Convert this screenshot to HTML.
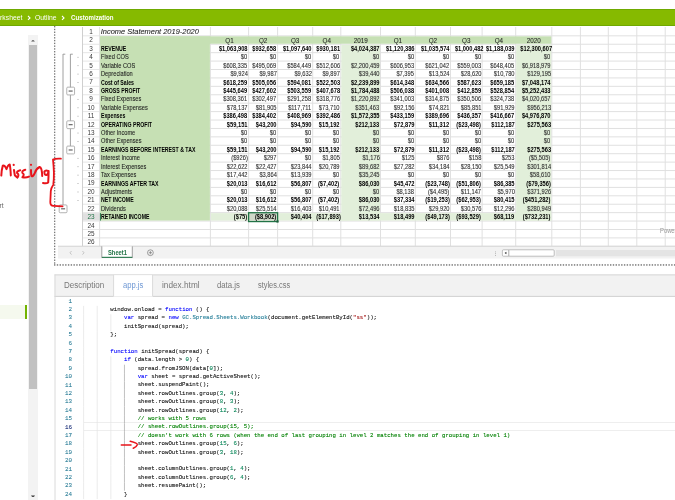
<!DOCTYPE html><html><head><meta charset="utf-8"><style>
*{margin:0;padding:0;box-sizing:border-box}
html,body{width:675px;height:500px;overflow:hidden;background:#fff;position:relative;font-family:"Liberation Sans",sans-serif}
.ab{position:absolute}
.c{position:absolute;white-space:nowrap;font-size:6.5px;line-height:8px;color:#2a2a2a;-webkit-text-stroke:0.08px #2a2a2a}
.n{text-align:right}
.n span{display:inline-block;transform:scaleX(.88);transform-origin:100% 50%}
.l{color:#1a1a1a}
.l span{display:inline-block;transform:scaleX(.87);transform-origin:0 50%}
.l.b span{transform:scaleX(.80)}
.q span{display:inline-block}
.b{font-weight:bold;color:#000;-webkit-text-stroke:0}
.cd{position:absolute;left:0;white-space:pre;font-family:"Liberation Mono",monospace;font-size:6.2px;line-height:8.4px;color:#111;-webkit-text-stroke:0.1px currentColor;transform:scaleX(.9205);transform-origin:0 50%}
.ln{position:absolute;width:20px;text-align:right;font-family:"Liberation Mono",monospace;font-size:5.9px;line-height:8.4px;color:#237893;-webkit-text-stroke:0.05px currentColor}
.k{color:#0000ff}.t{color:#267f99}.s{color:#a31515}.nm{color:#098658}.cm{color:#008000}
</style></head><body><div style="position:absolute;left:0;top:0;width:675px;height:500px;will-change:transform">

<div class="ab" style="left:0;top:9px;width:675px;height:17px;background:#86ba00;border-top:0.9px solid #6fa900;border-bottom:1px solid #6fa900"></div>
<div style="position:absolute;top:13px;height:9px;line-height:9px;color:#fff;white-space:nowrap;transform-origin:0 50%;left:-9.8px;font-size:7.4px;transform:scaleX(.92)">Worksheet</div>
<svg class="ab" style="left:26.5px;top:15px" width="4" height="6"><path d="M1 1 L3 2.9 L1 4.8" fill="none" stroke="#fff" stroke-width="1.1"/></svg>
<div style="position:absolute;top:13px;height:9px;line-height:9px;color:#fff;white-space:nowrap;transform-origin:0 50%;left:35.2px;font-size:7.4px;transform:scaleX(.92)">Outline</div>
<svg class="ab" style="left:61.3px;top:15px" width="4" height="6"><path d="M1 1 L3 2.9 L1 4.8" fill="none" stroke="#fff" stroke-width="1.1"/></svg>
<div style="position:absolute;top:13px;height:9px;line-height:9px;color:#fff;white-space:nowrap;transform-origin:0 50%;left:70.5px;font-size:7.0px;font-weight:bold;transform:scaleX(.88)">Customization</div>
<div class="ab" style="left:-0.4px;top:200.8px;font-size:6.6px;line-height:9px;color:#666">rt</div>
<div class="ab" style="left:0;top:305px;width:25.3px;height:14px;background:#f5f9ee"></div>
<div class="ab" style="left:25.2px;top:305px;width:2.1px;height:14px;background:#72b400"></div>
<div class="ab" style="left:27.5px;top:35px;width:10.3px;height:465px;background:#f3f3f3"></div>
<div class="ab" style="left:29.3px;top:45px;width:7.8px;height:344px;background:#c1c1c1"></div>
<svg class="ab" style="left:27px;top:35px" width="11" height="11"><path d="M4.1 6.6 Q6 3.6 7.9 6.6Z" fill="#555"/></svg>
<svg class="ab" style="left:27px;top:490px" width="11" height="10"><path d="M4 5.6 Q6 8.6 8 5.6Z" fill="#333"/></svg>
<svg class="ab" style="left:0;top:0" width="675" height="500">
<line x1="82.5" x2="99.6" y1="35.82" y2="35.82" stroke="#e6e6e6" stroke-width="1"/>
<line x1="99.6" x2="675" y1="35.82" y2="35.82" stroke="#e0e0e0" stroke-width="1"/>
<line x1="82.5" x2="99.6" y1="44.24" y2="44.24" stroke="#e6e6e6" stroke-width="1"/>
<line x1="99.6" x2="675" y1="44.24" y2="44.24" stroke="#e0e0e0" stroke-width="1"/>
<line x1="82.5" x2="99.6" y1="52.66" y2="52.66" stroke="#e6e6e6" stroke-width="1"/>
<line x1="99.6" x2="675" y1="52.66" y2="52.66" stroke="#e0e0e0" stroke-width="1"/>
<line x1="82.5" x2="99.6" y1="61.08" y2="61.08" stroke="#e6e6e6" stroke-width="1"/>
<line x1="99.6" x2="675" y1="61.08" y2="61.08" stroke="#e0e0e0" stroke-width="1"/>
<line x1="82.5" x2="99.6" y1="69.50" y2="69.50" stroke="#e6e6e6" stroke-width="1"/>
<line x1="99.6" x2="675" y1="69.50" y2="69.50" stroke="#e0e0e0" stroke-width="1"/>
<line x1="82.5" x2="99.6" y1="77.92" y2="77.92" stroke="#e6e6e6" stroke-width="1"/>
<line x1="99.6" x2="675" y1="77.92" y2="77.92" stroke="#e0e0e0" stroke-width="1"/>
<line x1="82.5" x2="99.6" y1="86.34" y2="86.34" stroke="#e6e6e6" stroke-width="1"/>
<line x1="99.6" x2="675" y1="86.34" y2="86.34" stroke="#e0e0e0" stroke-width="1"/>
<line x1="82.5" x2="99.6" y1="94.76" y2="94.76" stroke="#e6e6e6" stroke-width="1"/>
<line x1="99.6" x2="675" y1="94.76" y2="94.76" stroke="#e0e0e0" stroke-width="1"/>
<line x1="82.5" x2="99.6" y1="103.18" y2="103.18" stroke="#e6e6e6" stroke-width="1"/>
<line x1="99.6" x2="675" y1="103.18" y2="103.18" stroke="#e0e0e0" stroke-width="1"/>
<line x1="82.5" x2="99.6" y1="111.60" y2="111.60" stroke="#e6e6e6" stroke-width="1"/>
<line x1="99.6" x2="675" y1="111.60" y2="111.60" stroke="#e0e0e0" stroke-width="1"/>
<line x1="82.5" x2="99.6" y1="120.02" y2="120.02" stroke="#e6e6e6" stroke-width="1"/>
<line x1="99.6" x2="675" y1="120.02" y2="120.02" stroke="#e0e0e0" stroke-width="1"/>
<line x1="82.5" x2="99.6" y1="128.44" y2="128.44" stroke="#e6e6e6" stroke-width="1"/>
<line x1="99.6" x2="675" y1="128.44" y2="128.44" stroke="#e0e0e0" stroke-width="1"/>
<line x1="82.5" x2="99.6" y1="136.86" y2="136.86" stroke="#e6e6e6" stroke-width="1"/>
<line x1="99.6" x2="675" y1="136.86" y2="136.86" stroke="#e0e0e0" stroke-width="1"/>
<line x1="82.5" x2="99.6" y1="145.28" y2="145.28" stroke="#e6e6e6" stroke-width="1"/>
<line x1="99.6" x2="675" y1="145.28" y2="145.28" stroke="#e0e0e0" stroke-width="1"/>
<line x1="82.5" x2="99.6" y1="153.70" y2="153.70" stroke="#e6e6e6" stroke-width="1"/>
<line x1="99.6" x2="675" y1="153.70" y2="153.70" stroke="#e0e0e0" stroke-width="1"/>
<line x1="82.5" x2="99.6" y1="162.12" y2="162.12" stroke="#e6e6e6" stroke-width="1"/>
<line x1="99.6" x2="675" y1="162.12" y2="162.12" stroke="#e0e0e0" stroke-width="1"/>
<line x1="82.5" x2="99.6" y1="170.54" y2="170.54" stroke="#e6e6e6" stroke-width="1"/>
<line x1="99.6" x2="675" y1="170.54" y2="170.54" stroke="#e0e0e0" stroke-width="1"/>
<line x1="82.5" x2="99.6" y1="178.96" y2="178.96" stroke="#e6e6e6" stroke-width="1"/>
<line x1="99.6" x2="675" y1="178.96" y2="178.96" stroke="#e0e0e0" stroke-width="1"/>
<line x1="82.5" x2="99.6" y1="187.38" y2="187.38" stroke="#e6e6e6" stroke-width="1"/>
<line x1="99.6" x2="675" y1="187.38" y2="187.38" stroke="#e0e0e0" stroke-width="1"/>
<line x1="82.5" x2="99.6" y1="195.80" y2="195.80" stroke="#e6e6e6" stroke-width="1"/>
<line x1="99.6" x2="675" y1="195.80" y2="195.80" stroke="#e0e0e0" stroke-width="1"/>
<line x1="82.5" x2="99.6" y1="204.22" y2="204.22" stroke="#e6e6e6" stroke-width="1"/>
<line x1="99.6" x2="675" y1="204.22" y2="204.22" stroke="#e0e0e0" stroke-width="1"/>
<line x1="82.5" x2="99.6" y1="212.64" y2="212.64" stroke="#e6e6e6" stroke-width="1"/>
<line x1="99.6" x2="675" y1="212.64" y2="212.64" stroke="#e0e0e0" stroke-width="1"/>
<line x1="82.5" x2="99.6" y1="221.06" y2="221.06" stroke="#e6e6e6" stroke-width="1"/>
<line x1="99.6" x2="675" y1="221.06" y2="221.06" stroke="#e0e0e0" stroke-width="1"/>
<line x1="82.5" x2="99.6" y1="229.48" y2="229.48" stroke="#e6e6e6" stroke-width="1"/>
<line x1="99.6" x2="675" y1="229.48" y2="229.48" stroke="#e0e0e0" stroke-width="1"/>
<line x1="82.5" x2="99.6" y1="237.90" y2="237.90" stroke="#e6e6e6" stroke-width="1"/>
<line x1="99.6" x2="675" y1="237.90" y2="237.90" stroke="#e0e0e0" stroke-width="1"/>
<line x1="82.5" x2="99.6" y1="246.32" y2="246.32" stroke="#e6e6e6" stroke-width="1"/>
<line x1="99.6" x2="675" y1="246.32" y2="246.32" stroke="#e0e0e0" stroke-width="1"/>
<line x1="99.6" x2="99.6" y1="27" y2="246.32" stroke="#e0e0e0" stroke-width="1"/>
<line x1="210.4" x2="210.4" y1="27" y2="246.32" stroke="#e0e0e0" stroke-width="1"/>
<line x1="248.6" x2="248.6" y1="27" y2="246.32" stroke="#e0e0e0" stroke-width="1"/>
<line x1="277.6" x2="277.6" y1="27" y2="246.32" stroke="#e0e0e0" stroke-width="1"/>
<line x1="312.7" x2="312.7" y1="27" y2="246.32" stroke="#e0e0e0" stroke-width="1"/>
<line x1="340.8" x2="340.8" y1="27" y2="246.32" stroke="#e0e0e0" stroke-width="1"/>
<line x1="380.5" x2="380.5" y1="27" y2="246.32" stroke="#e0e0e0" stroke-width="1"/>
<line x1="415.3" x2="415.3" y1="27" y2="246.32" stroke="#e0e0e0" stroke-width="1"/>
<line x1="450.5" x2="450.5" y1="27" y2="246.32" stroke="#e0e0e0" stroke-width="1"/>
<line x1="482.1" x2="482.1" y1="27" y2="246.32" stroke="#e0e0e0" stroke-width="1"/>
<line x1="515.7" x2="515.7" y1="27" y2="246.32" stroke="#e0e0e0" stroke-width="1"/>
<line x1="551.8" x2="551.8" y1="27" y2="246.32" stroke="#e0e0e0" stroke-width="1"/>
<line x1="580.4" x2="580.4" y1="27" y2="246.32" stroke="#e0e0e0" stroke-width="1"/>
<line x1="608.3" x2="608.3" y1="27" y2="246.32" stroke="#e0e0e0" stroke-width="1"/>
<line x1="636.8" x2="636.8" y1="27" y2="246.32" stroke="#e0e0e0" stroke-width="1"/>
<line x1="665.2" x2="665.2" y1="27" y2="246.32" stroke="#e0e0e0" stroke-width="1"/>
<line x1="693.6" x2="693.6" y1="27" y2="246.32" stroke="#e0e0e0" stroke-width="1"/>
<line x1="82.5" x2="82.5" y1="27" y2="246.32" stroke="#cfcfcf" stroke-width="1"/>
<rect x="100.10" y="36.32" width="451.20" height="7.42" fill="#c6e0b4"/>
<rect x="100.10" y="36.32" width="109.80" height="184.24" fill="#c6e0b4"/>
<rect x="341.30" y="44.74" width="38.70" height="175.82" fill="#e2efda"/>
<rect x="516.20" y="44.74" width="35.10" height="175.82" fill="#e2efda"/>
<rect x="210.90" y="213.14" width="340.40" height="7.42" fill="#e2efda"/>
<rect x="83.00" y="213.14" width="16.10" height="7.42" fill="#e0e0e0"/>
<rect x="249.10" y="213.14" width="28.00" height="7.42" fill="#d0d8c8"/>
<rect x="248.60" y="212.74" width="29.00" height="8.82" fill="none" stroke="#217346" stroke-width="1.3"/>
<rect x="276.40" y="220.36" width="2.2" height="2.2" fill="#1d5e3a"/>
<line x1="100.39999999999999" x2="100.39999999999999" y1="213.14" y2="220.56" stroke="#217346" stroke-width="1"/>
<line x1="63" x2="63" y1="54.00" y2="205.00" stroke="#a0a0a0" stroke-width="1"/>
<line x1="63" x2="65.3" y1="54.20" y2="54.20" stroke="#a0a0a0" stroke-width="1"/>
<line x1="70.4" x2="70.4" y1="54.00" y2="88.00" stroke="#a0a0a0" stroke-width="1"/>
<line x1="70.4" x2="72.8" y1="54.20" y2="54.20" stroke="#a0a0a0" stroke-width="1"/>
<line x1="70.4" x2="70.4" y1="95.00" y2="121.00" stroke="#a0a0a0" stroke-width="1"/>
<line x1="70.4" x2="70.4" y1="128.40" y2="146.00" stroke="#a0a0a0" stroke-width="1"/>
<rect x="66.75" y="87.15" width="7.8" height="7.8" rx="1" fill="#fff" stroke="#a0a0a0" stroke-width="0.8"/>
<line x1="68.65" x2="72.65" y1="91.05" y2="91.05" stroke="#333" stroke-width="0.9"/>
<rect x="66.75" y="120.83" width="7.8" height="7.8" rx="1" fill="#fff" stroke="#a0a0a0" stroke-width="0.8"/>
<line x1="68.65" x2="72.65" y1="124.73" y2="124.73" stroke="#333" stroke-width="0.9"/>
<rect x="66.75" y="146.09" width="7.8" height="7.8" rx="1" fill="#fff" stroke="#a0a0a0" stroke-width="0.8"/>
<line x1="68.65" x2="72.65" y1="149.99" y2="149.99" stroke="#333" stroke-width="0.9"/>
<rect x="59.20" y="204.93" width="7.8" height="7.8" rx="1" fill="#fff" stroke="#a0a0a0" stroke-width="0.8"/>
<line x1="61.10" x2="65.10" y1="208.83" y2="208.83" stroke="#333" stroke-width="0.9"/>
<rect x="77.5" y="56.87" width="1" height="0.8" fill="#999"/>
<rect x="77.5" y="65.29" width="1" height="0.8" fill="#999"/>
<rect x="77.5" y="73.71" width="1" height="0.8" fill="#999"/>
<rect x="77.5" y="82.13" width="1" height="0.8" fill="#999"/>
<rect x="77.5" y="98.97" width="1" height="0.8" fill="#999"/>
<rect x="77.5" y="107.39" width="1" height="0.8" fill="#999"/>
<rect x="77.5" y="115.81" width="1" height="0.8" fill="#999"/>
<rect x="77.5" y="132.65" width="1" height="0.8" fill="#999"/>
<rect x="77.5" y="141.07" width="1" height="0.8" fill="#999"/>
<rect x="77.5" y="157.91" width="1" height="0.8" fill="#999"/>
<rect x="77.5" y="166.33" width="1" height="0.8" fill="#999"/>
<rect x="77.5" y="174.75" width="1" height="0.8" fill="#999"/>
<rect x="77.5" y="183.17" width="1" height="0.8" fill="#999"/>
<rect x="77.5" y="191.59" width="1" height="0.8" fill="#999"/>
<rect x="77.5" y="200.01" width="1" height="0.8" fill="#999"/>
<rect x="54" y="26.00" width="1.3" height="1.4" fill="#7a7a7a"/>
<rect x="54" y="28.78" width="1.3" height="1.4" fill="#7a7a7a"/>
<rect x="54" y="31.56" width="1.3" height="1.4" fill="#7a7a7a"/>
<rect x="54" y="34.34" width="1.3" height="1.4" fill="#7a7a7a"/>
<rect x="54" y="37.12" width="1.3" height="1.4" fill="#7a7a7a"/>
<rect x="54" y="39.90" width="1.3" height="1.4" fill="#7a7a7a"/>
<rect x="54" y="42.68" width="1.3" height="1.4" fill="#7a7a7a"/>
<rect x="54" y="45.46" width="1.3" height="1.4" fill="#7a7a7a"/>
<rect x="54" y="48.24" width="1.3" height="1.4" fill="#7a7a7a"/>
<rect x="54" y="51.02" width="1.3" height="1.4" fill="#7a7a7a"/>
<rect x="54" y="53.80" width="1.3" height="1.4" fill="#7a7a7a"/>
<rect x="54" y="56.58" width="1.3" height="1.4" fill="#7a7a7a"/>
<rect x="54" y="59.36" width="1.3" height="1.4" fill="#7a7a7a"/>
<rect x="54" y="62.14" width="1.3" height="1.4" fill="#7a7a7a"/>
<rect x="54" y="64.92" width="1.3" height="1.4" fill="#7a7a7a"/>
<rect x="54" y="67.70" width="1.3" height="1.4" fill="#7a7a7a"/>
<rect x="54" y="70.48" width="1.3" height="1.4" fill="#7a7a7a"/>
<rect x="54" y="73.26" width="1.3" height="1.4" fill="#7a7a7a"/>
<rect x="54" y="76.04" width="1.3" height="1.4" fill="#7a7a7a"/>
<rect x="54" y="78.82" width="1.3" height="1.4" fill="#7a7a7a"/>
<rect x="54" y="81.60" width="1.3" height="1.4" fill="#7a7a7a"/>
<rect x="54" y="84.38" width="1.3" height="1.4" fill="#7a7a7a"/>
<rect x="54" y="87.16" width="1.3" height="1.4" fill="#7a7a7a"/>
<rect x="54" y="89.94" width="1.3" height="1.4" fill="#7a7a7a"/>
<rect x="54" y="92.72" width="1.3" height="1.4" fill="#7a7a7a"/>
<rect x="54" y="95.50" width="1.3" height="1.4" fill="#7a7a7a"/>
<rect x="54" y="98.28" width="1.3" height="1.4" fill="#7a7a7a"/>
<rect x="54" y="101.06" width="1.3" height="1.4" fill="#7a7a7a"/>
<rect x="54" y="103.84" width="1.3" height="1.4" fill="#7a7a7a"/>
<rect x="54" y="106.62" width="1.3" height="1.4" fill="#7a7a7a"/>
<rect x="54" y="109.40" width="1.3" height="1.4" fill="#7a7a7a"/>
<rect x="54" y="112.18" width="1.3" height="1.4" fill="#7a7a7a"/>
<rect x="54" y="114.96" width="1.3" height="1.4" fill="#7a7a7a"/>
<rect x="54" y="117.74" width="1.3" height="1.4" fill="#7a7a7a"/>
<rect x="54" y="120.52" width="1.3" height="1.4" fill="#7a7a7a"/>
<rect x="54" y="123.30" width="1.3" height="1.4" fill="#7a7a7a"/>
<rect x="54" y="126.08" width="1.3" height="1.4" fill="#7a7a7a"/>
<rect x="54" y="128.86" width="1.3" height="1.4" fill="#7a7a7a"/>
<rect x="54" y="131.64" width="1.3" height="1.4" fill="#7a7a7a"/>
<rect x="54" y="134.42" width="1.3" height="1.4" fill="#7a7a7a"/>
<rect x="54" y="137.20" width="1.3" height="1.4" fill="#7a7a7a"/>
<rect x="54" y="139.98" width="1.3" height="1.4" fill="#7a7a7a"/>
<rect x="54" y="142.76" width="1.3" height="1.4" fill="#7a7a7a"/>
<rect x="54" y="145.54" width="1.3" height="1.4" fill="#7a7a7a"/>
<rect x="54" y="148.32" width="1.3" height="1.4" fill="#7a7a7a"/>
<rect x="54" y="151.10" width="1.3" height="1.4" fill="#7a7a7a"/>
<rect x="54" y="153.88" width="1.3" height="1.4" fill="#7a7a7a"/>
<rect x="54" y="156.66" width="1.3" height="1.4" fill="#7a7a7a"/>
<rect x="54" y="159.44" width="1.3" height="1.4" fill="#7a7a7a"/>
<rect x="54" y="162.22" width="1.3" height="1.4" fill="#7a7a7a"/>
<rect x="54" y="165.00" width="1.3" height="1.4" fill="#7a7a7a"/>
<rect x="54" y="167.78" width="1.3" height="1.4" fill="#7a7a7a"/>
<rect x="54" y="170.56" width="1.3" height="1.4" fill="#7a7a7a"/>
<rect x="54" y="173.34" width="1.3" height="1.4" fill="#7a7a7a"/>
<rect x="54" y="176.12" width="1.3" height="1.4" fill="#7a7a7a"/>
<rect x="54" y="178.90" width="1.3" height="1.4" fill="#7a7a7a"/>
<rect x="54" y="181.68" width="1.3" height="1.4" fill="#7a7a7a"/>
<rect x="54" y="184.46" width="1.3" height="1.4" fill="#7a7a7a"/>
<rect x="54" y="187.24" width="1.3" height="1.4" fill="#7a7a7a"/>
<rect x="54" y="190.02" width="1.3" height="1.4" fill="#7a7a7a"/>
<rect x="54" y="192.80" width="1.3" height="1.4" fill="#7a7a7a"/>
<rect x="54" y="195.58" width="1.3" height="1.4" fill="#7a7a7a"/>
<rect x="54" y="198.36" width="1.3" height="1.4" fill="#7a7a7a"/>
<rect x="54" y="201.14" width="1.3" height="1.4" fill="#7a7a7a"/>
<rect x="54" y="203.92" width="1.3" height="1.4" fill="#7a7a7a"/>
<rect x="54" y="206.70" width="1.3" height="1.4" fill="#7a7a7a"/>
<rect x="54" y="209.48" width="1.3" height="1.4" fill="#7a7a7a"/>
<rect x="54" y="212.26" width="1.3" height="1.4" fill="#7a7a7a"/>
<rect x="54" y="215.04" width="1.3" height="1.4" fill="#7a7a7a"/>
<rect x="54" y="217.82" width="1.3" height="1.4" fill="#7a7a7a"/>
<rect x="54" y="220.60" width="1.3" height="1.4" fill="#7a7a7a"/>
<rect x="54" y="223.38" width="1.3" height="1.4" fill="#7a7a7a"/>
<rect x="54" y="226.16" width="1.3" height="1.4" fill="#7a7a7a"/>
<rect x="54" y="228.94" width="1.3" height="1.4" fill="#7a7a7a"/>
<rect x="54" y="231.72" width="1.3" height="1.4" fill="#7a7a7a"/>
<rect x="54" y="234.50" width="1.3" height="1.4" fill="#7a7a7a"/>
<rect x="54" y="237.28" width="1.3" height="1.4" fill="#7a7a7a"/>
<rect x="54" y="240.06" width="1.3" height="1.4" fill="#7a7a7a"/>
<rect x="54" y="242.84" width="1.3" height="1.4" fill="#7a7a7a"/>
<rect x="54" y="245.62" width="1.3" height="1.4" fill="#7a7a7a"/>
<rect x="54" y="248.40" width="1.3" height="1.4" fill="#7a7a7a"/>
<rect x="54" y="251.18" width="1.3" height="1.4" fill="#7a7a7a"/>
<rect x="54" y="253.96" width="1.3" height="1.4" fill="#7a7a7a"/>
<rect x="54" y="256.74" width="1.3" height="1.4" fill="#7a7a7a"/>
<rect x="54" y="259.52" width="1.3" height="1.4" fill="#7a7a7a"/>
<rect x="54" y="262.30" width="1.3" height="1.4" fill="#7a7a7a"/>
<rect x="54.00" y="264.2" width="1.4" height="1.5" fill="#7a7a7a"/>
<rect x="56.78" y="264.2" width="1.4" height="1.5" fill="#7a7a7a"/>
<rect x="59.56" y="264.2" width="1.4" height="1.5" fill="#7a7a7a"/>
<rect x="62.34" y="264.2" width="1.4" height="1.5" fill="#7a7a7a"/>
<rect x="65.12" y="264.2" width="1.4" height="1.5" fill="#7a7a7a"/>
<rect x="67.90" y="264.2" width="1.4" height="1.5" fill="#7a7a7a"/>
<rect x="70.68" y="264.2" width="1.4" height="1.5" fill="#7a7a7a"/>
<rect x="73.46" y="264.2" width="1.4" height="1.5" fill="#7a7a7a"/>
<rect x="76.24" y="264.2" width="1.4" height="1.5" fill="#7a7a7a"/>
<rect x="79.02" y="264.2" width="1.4" height="1.5" fill="#7a7a7a"/>
<rect x="81.80" y="264.2" width="1.4" height="1.5" fill="#7a7a7a"/>
<rect x="84.58" y="264.2" width="1.4" height="1.5" fill="#7a7a7a"/>
<rect x="87.36" y="264.2" width="1.4" height="1.5" fill="#7a7a7a"/>
<rect x="90.14" y="264.2" width="1.4" height="1.5" fill="#7a7a7a"/>
<rect x="92.92" y="264.2" width="1.4" height="1.5" fill="#7a7a7a"/>
<rect x="95.70" y="264.2" width="1.4" height="1.5" fill="#7a7a7a"/>
<rect x="98.48" y="264.2" width="1.4" height="1.5" fill="#7a7a7a"/>
<rect x="101.26" y="264.2" width="1.4" height="1.5" fill="#7a7a7a"/>
<rect x="104.04" y="264.2" width="1.4" height="1.5" fill="#7a7a7a"/>
<rect x="106.82" y="264.2" width="1.4" height="1.5" fill="#7a7a7a"/>
<rect x="109.60" y="264.2" width="1.4" height="1.5" fill="#7a7a7a"/>
<rect x="112.38" y="264.2" width="1.4" height="1.5" fill="#7a7a7a"/>
<rect x="115.16" y="264.2" width="1.4" height="1.5" fill="#7a7a7a"/>
<rect x="117.94" y="264.2" width="1.4" height="1.5" fill="#7a7a7a"/>
<rect x="120.72" y="264.2" width="1.4" height="1.5" fill="#7a7a7a"/>
<rect x="123.50" y="264.2" width="1.4" height="1.5" fill="#7a7a7a"/>
<rect x="126.28" y="264.2" width="1.4" height="1.5" fill="#7a7a7a"/>
<rect x="129.06" y="264.2" width="1.4" height="1.5" fill="#7a7a7a"/>
<rect x="131.84" y="264.2" width="1.4" height="1.5" fill="#7a7a7a"/>
<rect x="134.62" y="264.2" width="1.4" height="1.5" fill="#7a7a7a"/>
<rect x="137.40" y="264.2" width="1.4" height="1.5" fill="#7a7a7a"/>
<rect x="140.18" y="264.2" width="1.4" height="1.5" fill="#7a7a7a"/>
<rect x="142.96" y="264.2" width="1.4" height="1.5" fill="#7a7a7a"/>
<rect x="145.74" y="264.2" width="1.4" height="1.5" fill="#7a7a7a"/>
<rect x="148.52" y="264.2" width="1.4" height="1.5" fill="#7a7a7a"/>
<rect x="151.30" y="264.2" width="1.4" height="1.5" fill="#7a7a7a"/>
<rect x="154.08" y="264.2" width="1.4" height="1.5" fill="#7a7a7a"/>
<rect x="156.86" y="264.2" width="1.4" height="1.5" fill="#7a7a7a"/>
<rect x="159.64" y="264.2" width="1.4" height="1.5" fill="#7a7a7a"/>
<rect x="162.42" y="264.2" width="1.4" height="1.5" fill="#7a7a7a"/>
<rect x="165.20" y="264.2" width="1.4" height="1.5" fill="#7a7a7a"/>
<rect x="167.98" y="264.2" width="1.4" height="1.5" fill="#7a7a7a"/>
<rect x="170.76" y="264.2" width="1.4" height="1.5" fill="#7a7a7a"/>
<rect x="173.54" y="264.2" width="1.4" height="1.5" fill="#7a7a7a"/>
<rect x="176.32" y="264.2" width="1.4" height="1.5" fill="#7a7a7a"/>
<rect x="179.10" y="264.2" width="1.4" height="1.5" fill="#7a7a7a"/>
<rect x="181.88" y="264.2" width="1.4" height="1.5" fill="#7a7a7a"/>
<rect x="184.66" y="264.2" width="1.4" height="1.5" fill="#7a7a7a"/>
<rect x="187.44" y="264.2" width="1.4" height="1.5" fill="#7a7a7a"/>
<rect x="190.22" y="264.2" width="1.4" height="1.5" fill="#7a7a7a"/>
<rect x="193.00" y="264.2" width="1.4" height="1.5" fill="#7a7a7a"/>
<rect x="195.78" y="264.2" width="1.4" height="1.5" fill="#7a7a7a"/>
<rect x="198.56" y="264.2" width="1.4" height="1.5" fill="#7a7a7a"/>
<rect x="201.34" y="264.2" width="1.4" height="1.5" fill="#7a7a7a"/>
<rect x="204.12" y="264.2" width="1.4" height="1.5" fill="#7a7a7a"/>
<rect x="206.90" y="264.2" width="1.4" height="1.5" fill="#7a7a7a"/>
<rect x="209.68" y="264.2" width="1.4" height="1.5" fill="#7a7a7a"/>
<rect x="212.46" y="264.2" width="1.4" height="1.5" fill="#7a7a7a"/>
<rect x="215.24" y="264.2" width="1.4" height="1.5" fill="#7a7a7a"/>
<rect x="218.02" y="264.2" width="1.4" height="1.5" fill="#7a7a7a"/>
<rect x="220.80" y="264.2" width="1.4" height="1.5" fill="#7a7a7a"/>
<rect x="223.58" y="264.2" width="1.4" height="1.5" fill="#7a7a7a"/>
<rect x="226.36" y="264.2" width="1.4" height="1.5" fill="#7a7a7a"/>
<rect x="229.14" y="264.2" width="1.4" height="1.5" fill="#7a7a7a"/>
<rect x="231.92" y="264.2" width="1.4" height="1.5" fill="#7a7a7a"/>
<rect x="234.70" y="264.2" width="1.4" height="1.5" fill="#7a7a7a"/>
<rect x="237.48" y="264.2" width="1.4" height="1.5" fill="#7a7a7a"/>
<rect x="240.26" y="264.2" width="1.4" height="1.5" fill="#7a7a7a"/>
<rect x="243.04" y="264.2" width="1.4" height="1.5" fill="#7a7a7a"/>
<rect x="245.82" y="264.2" width="1.4" height="1.5" fill="#7a7a7a"/>
<rect x="248.60" y="264.2" width="1.4" height="1.5" fill="#7a7a7a"/>
<rect x="251.38" y="264.2" width="1.4" height="1.5" fill="#7a7a7a"/>
<rect x="254.16" y="264.2" width="1.4" height="1.5" fill="#7a7a7a"/>
<rect x="256.94" y="264.2" width="1.4" height="1.5" fill="#7a7a7a"/>
<rect x="259.72" y="264.2" width="1.4" height="1.5" fill="#7a7a7a"/>
<rect x="262.50" y="264.2" width="1.4" height="1.5" fill="#7a7a7a"/>
<rect x="265.28" y="264.2" width="1.4" height="1.5" fill="#7a7a7a"/>
<rect x="268.06" y="264.2" width="1.4" height="1.5" fill="#7a7a7a"/>
<rect x="270.84" y="264.2" width="1.4" height="1.5" fill="#7a7a7a"/>
<rect x="273.62" y="264.2" width="1.4" height="1.5" fill="#7a7a7a"/>
<rect x="276.40" y="264.2" width="1.4" height="1.5" fill="#7a7a7a"/>
<rect x="279.18" y="264.2" width="1.4" height="1.5" fill="#7a7a7a"/>
<rect x="281.96" y="264.2" width="1.4" height="1.5" fill="#7a7a7a"/>
<rect x="284.74" y="264.2" width="1.4" height="1.5" fill="#7a7a7a"/>
<rect x="287.52" y="264.2" width="1.4" height="1.5" fill="#7a7a7a"/>
<rect x="290.30" y="264.2" width="1.4" height="1.5" fill="#7a7a7a"/>
<rect x="293.08" y="264.2" width="1.4" height="1.5" fill="#7a7a7a"/>
<rect x="295.86" y="264.2" width="1.4" height="1.5" fill="#7a7a7a"/>
<rect x="298.64" y="264.2" width="1.4" height="1.5" fill="#7a7a7a"/>
<rect x="301.42" y="264.2" width="1.4" height="1.5" fill="#7a7a7a"/>
<rect x="304.20" y="264.2" width="1.4" height="1.5" fill="#7a7a7a"/>
<rect x="306.98" y="264.2" width="1.4" height="1.5" fill="#7a7a7a"/>
<rect x="309.76" y="264.2" width="1.4" height="1.5" fill="#7a7a7a"/>
<rect x="312.54" y="264.2" width="1.4" height="1.5" fill="#7a7a7a"/>
<rect x="315.32" y="264.2" width="1.4" height="1.5" fill="#7a7a7a"/>
<rect x="318.10" y="264.2" width="1.4" height="1.5" fill="#7a7a7a"/>
<rect x="320.88" y="264.2" width="1.4" height="1.5" fill="#7a7a7a"/>
<rect x="323.66" y="264.2" width="1.4" height="1.5" fill="#7a7a7a"/>
<rect x="326.44" y="264.2" width="1.4" height="1.5" fill="#7a7a7a"/>
<rect x="329.22" y="264.2" width="1.4" height="1.5" fill="#7a7a7a"/>
<rect x="332.00" y="264.2" width="1.4" height="1.5" fill="#7a7a7a"/>
<rect x="334.78" y="264.2" width="1.4" height="1.5" fill="#7a7a7a"/>
<rect x="337.56" y="264.2" width="1.4" height="1.5" fill="#7a7a7a"/>
<rect x="340.34" y="264.2" width="1.4" height="1.5" fill="#7a7a7a"/>
<rect x="343.12" y="264.2" width="1.4" height="1.5" fill="#7a7a7a"/>
<rect x="345.90" y="264.2" width="1.4" height="1.5" fill="#7a7a7a"/>
<rect x="348.68" y="264.2" width="1.4" height="1.5" fill="#7a7a7a"/>
<rect x="351.46" y="264.2" width="1.4" height="1.5" fill="#7a7a7a"/>
<rect x="354.24" y="264.2" width="1.4" height="1.5" fill="#7a7a7a"/>
<rect x="357.02" y="264.2" width="1.4" height="1.5" fill="#7a7a7a"/>
<rect x="359.80" y="264.2" width="1.4" height="1.5" fill="#7a7a7a"/>
<rect x="362.58" y="264.2" width="1.4" height="1.5" fill="#7a7a7a"/>
<rect x="365.36" y="264.2" width="1.4" height="1.5" fill="#7a7a7a"/>
<rect x="368.14" y="264.2" width="1.4" height="1.5" fill="#7a7a7a"/>
<rect x="370.92" y="264.2" width="1.4" height="1.5" fill="#7a7a7a"/>
<rect x="373.70" y="264.2" width="1.4" height="1.5" fill="#7a7a7a"/>
<rect x="376.48" y="264.2" width="1.4" height="1.5" fill="#7a7a7a"/>
<rect x="379.26" y="264.2" width="1.4" height="1.5" fill="#7a7a7a"/>
<rect x="382.04" y="264.2" width="1.4" height="1.5" fill="#7a7a7a"/>
<rect x="384.82" y="264.2" width="1.4" height="1.5" fill="#7a7a7a"/>
<rect x="387.60" y="264.2" width="1.4" height="1.5" fill="#7a7a7a"/>
<rect x="390.38" y="264.2" width="1.4" height="1.5" fill="#7a7a7a"/>
<rect x="393.16" y="264.2" width="1.4" height="1.5" fill="#7a7a7a"/>
<rect x="395.94" y="264.2" width="1.4" height="1.5" fill="#7a7a7a"/>
<rect x="398.72" y="264.2" width="1.4" height="1.5" fill="#7a7a7a"/>
<rect x="401.50" y="264.2" width="1.4" height="1.5" fill="#7a7a7a"/>
<rect x="404.28" y="264.2" width="1.4" height="1.5" fill="#7a7a7a"/>
<rect x="407.06" y="264.2" width="1.4" height="1.5" fill="#7a7a7a"/>
<rect x="409.84" y="264.2" width="1.4" height="1.5" fill="#7a7a7a"/>
<rect x="412.62" y="264.2" width="1.4" height="1.5" fill="#7a7a7a"/>
<rect x="415.40" y="264.2" width="1.4" height="1.5" fill="#7a7a7a"/>
<rect x="418.18" y="264.2" width="1.4" height="1.5" fill="#7a7a7a"/>
<rect x="420.96" y="264.2" width="1.4" height="1.5" fill="#7a7a7a"/>
<rect x="423.74" y="264.2" width="1.4" height="1.5" fill="#7a7a7a"/>
<rect x="426.52" y="264.2" width="1.4" height="1.5" fill="#7a7a7a"/>
<rect x="429.30" y="264.2" width="1.4" height="1.5" fill="#7a7a7a"/>
<rect x="432.08" y="264.2" width="1.4" height="1.5" fill="#7a7a7a"/>
<rect x="434.86" y="264.2" width="1.4" height="1.5" fill="#7a7a7a"/>
<rect x="437.64" y="264.2" width="1.4" height="1.5" fill="#7a7a7a"/>
<rect x="440.42" y="264.2" width="1.4" height="1.5" fill="#7a7a7a"/>
<rect x="443.20" y="264.2" width="1.4" height="1.5" fill="#7a7a7a"/>
<rect x="445.98" y="264.2" width="1.4" height="1.5" fill="#7a7a7a"/>
<rect x="448.76" y="264.2" width="1.4" height="1.5" fill="#7a7a7a"/>
<rect x="451.54" y="264.2" width="1.4" height="1.5" fill="#7a7a7a"/>
<rect x="454.32" y="264.2" width="1.4" height="1.5" fill="#7a7a7a"/>
<rect x="457.10" y="264.2" width="1.4" height="1.5" fill="#7a7a7a"/>
<rect x="459.88" y="264.2" width="1.4" height="1.5" fill="#7a7a7a"/>
<rect x="462.66" y="264.2" width="1.4" height="1.5" fill="#7a7a7a"/>
<rect x="465.44" y="264.2" width="1.4" height="1.5" fill="#7a7a7a"/>
<rect x="468.22" y="264.2" width="1.4" height="1.5" fill="#7a7a7a"/>
<rect x="471.00" y="264.2" width="1.4" height="1.5" fill="#7a7a7a"/>
<rect x="473.78" y="264.2" width="1.4" height="1.5" fill="#7a7a7a"/>
<rect x="476.56" y="264.2" width="1.4" height="1.5" fill="#7a7a7a"/>
<rect x="479.34" y="264.2" width="1.4" height="1.5" fill="#7a7a7a"/>
<rect x="482.12" y="264.2" width="1.4" height="1.5" fill="#7a7a7a"/>
<rect x="484.90" y="264.2" width="1.4" height="1.5" fill="#7a7a7a"/>
<rect x="487.68" y="264.2" width="1.4" height="1.5" fill="#7a7a7a"/>
<rect x="490.46" y="264.2" width="1.4" height="1.5" fill="#7a7a7a"/>
<rect x="493.24" y="264.2" width="1.4" height="1.5" fill="#7a7a7a"/>
<rect x="496.02" y="264.2" width="1.4" height="1.5" fill="#7a7a7a"/>
<rect x="498.80" y="264.2" width="1.4" height="1.5" fill="#7a7a7a"/>
<rect x="501.58" y="264.2" width="1.4" height="1.5" fill="#7a7a7a"/>
<rect x="504.36" y="264.2" width="1.4" height="1.5" fill="#7a7a7a"/>
<rect x="507.14" y="264.2" width="1.4" height="1.5" fill="#7a7a7a"/>
<rect x="509.92" y="264.2" width="1.4" height="1.5" fill="#7a7a7a"/>
<rect x="512.70" y="264.2" width="1.4" height="1.5" fill="#7a7a7a"/>
<rect x="515.48" y="264.2" width="1.4" height="1.5" fill="#7a7a7a"/>
<rect x="518.26" y="264.2" width="1.4" height="1.5" fill="#7a7a7a"/>
<rect x="521.04" y="264.2" width="1.4" height="1.5" fill="#7a7a7a"/>
<rect x="523.82" y="264.2" width="1.4" height="1.5" fill="#7a7a7a"/>
<rect x="526.60" y="264.2" width="1.4" height="1.5" fill="#7a7a7a"/>
<rect x="529.38" y="264.2" width="1.4" height="1.5" fill="#7a7a7a"/>
<rect x="532.16" y="264.2" width="1.4" height="1.5" fill="#7a7a7a"/>
<rect x="534.94" y="264.2" width="1.4" height="1.5" fill="#7a7a7a"/>
<rect x="537.72" y="264.2" width="1.4" height="1.5" fill="#7a7a7a"/>
<rect x="540.50" y="264.2" width="1.4" height="1.5" fill="#7a7a7a"/>
<rect x="543.28" y="264.2" width="1.4" height="1.5" fill="#7a7a7a"/>
<rect x="546.06" y="264.2" width="1.4" height="1.5" fill="#7a7a7a"/>
<rect x="548.84" y="264.2" width="1.4" height="1.5" fill="#7a7a7a"/>
<rect x="551.62" y="264.2" width="1.4" height="1.5" fill="#7a7a7a"/>
<rect x="554.40" y="264.2" width="1.4" height="1.5" fill="#7a7a7a"/>
<rect x="557.18" y="264.2" width="1.4" height="1.5" fill="#7a7a7a"/>
<rect x="559.96" y="264.2" width="1.4" height="1.5" fill="#7a7a7a"/>
<rect x="562.74" y="264.2" width="1.4" height="1.5" fill="#7a7a7a"/>
<rect x="565.52" y="264.2" width="1.4" height="1.5" fill="#7a7a7a"/>
<rect x="568.30" y="264.2" width="1.4" height="1.5" fill="#7a7a7a"/>
<rect x="571.08" y="264.2" width="1.4" height="1.5" fill="#7a7a7a"/>
<rect x="573.86" y="264.2" width="1.4" height="1.5" fill="#7a7a7a"/>
<rect x="576.64" y="264.2" width="1.4" height="1.5" fill="#7a7a7a"/>
<rect x="579.42" y="264.2" width="1.4" height="1.5" fill="#7a7a7a"/>
<rect x="582.20" y="264.2" width="1.4" height="1.5" fill="#7a7a7a"/>
<rect x="584.98" y="264.2" width="1.4" height="1.5" fill="#7a7a7a"/>
<rect x="587.76" y="264.2" width="1.4" height="1.5" fill="#7a7a7a"/>
<rect x="590.54" y="264.2" width="1.4" height="1.5" fill="#7a7a7a"/>
<rect x="593.32" y="264.2" width="1.4" height="1.5" fill="#7a7a7a"/>
<rect x="596.10" y="264.2" width="1.4" height="1.5" fill="#7a7a7a"/>
<rect x="598.88" y="264.2" width="1.4" height="1.5" fill="#7a7a7a"/>
<rect x="601.66" y="264.2" width="1.4" height="1.5" fill="#7a7a7a"/>
<rect x="604.44" y="264.2" width="1.4" height="1.5" fill="#7a7a7a"/>
<rect x="607.22" y="264.2" width="1.4" height="1.5" fill="#7a7a7a"/>
<rect x="610.00" y="264.2" width="1.4" height="1.5" fill="#7a7a7a"/>
<rect x="612.78" y="264.2" width="1.4" height="1.5" fill="#7a7a7a"/>
<rect x="615.56" y="264.2" width="1.4" height="1.5" fill="#7a7a7a"/>
<rect x="618.34" y="264.2" width="1.4" height="1.5" fill="#7a7a7a"/>
<rect x="621.12" y="264.2" width="1.4" height="1.5" fill="#7a7a7a"/>
<rect x="623.90" y="264.2" width="1.4" height="1.5" fill="#7a7a7a"/>
<rect x="626.68" y="264.2" width="1.4" height="1.5" fill="#7a7a7a"/>
<rect x="629.46" y="264.2" width="1.4" height="1.5" fill="#7a7a7a"/>
<rect x="632.24" y="264.2" width="1.4" height="1.5" fill="#7a7a7a"/>
<rect x="635.02" y="264.2" width="1.4" height="1.5" fill="#7a7a7a"/>
<rect x="637.80" y="264.2" width="1.4" height="1.5" fill="#7a7a7a"/>
<rect x="640.58" y="264.2" width="1.4" height="1.5" fill="#7a7a7a"/>
<rect x="643.36" y="264.2" width="1.4" height="1.5" fill="#7a7a7a"/>
<rect x="646.14" y="264.2" width="1.4" height="1.5" fill="#7a7a7a"/>
<rect x="648.92" y="264.2" width="1.4" height="1.5" fill="#7a7a7a"/>
<rect x="651.70" y="264.2" width="1.4" height="1.5" fill="#7a7a7a"/>
<rect x="654.48" y="264.2" width="1.4" height="1.5" fill="#7a7a7a"/>
<rect x="657.26" y="264.2" width="1.4" height="1.5" fill="#7a7a7a"/>
<rect x="660.04" y="264.2" width="1.4" height="1.5" fill="#7a7a7a"/>
<rect x="662.82" y="264.2" width="1.4" height="1.5" fill="#7a7a7a"/>
<rect x="665.60" y="264.2" width="1.4" height="1.5" fill="#7a7a7a"/>
<rect x="668.38" y="264.2" width="1.4" height="1.5" fill="#7a7a7a"/>
<rect x="671.16" y="264.2" width="1.4" height="1.5" fill="#7a7a7a"/>
<rect x="673.94" y="264.2" width="1.4" height="1.5" fill="#7a7a7a"/>
<rect x="58.00" y="246.02" width="617.00" height="12.48" fill="#f2f2f2"/>
<line x1="58" x2="675" y1="246.22" y2="246.22" stroke="#d4d4d4" stroke-width="1"/>
<rect x="101.80" y="246.52" width="30.50" height="11.78" fill="#ffffff"/>
<line x1="101.8" x2="101.8" y1="246.32" y2="258.00" stroke="#a0a0a0" stroke-width="1"/>
<line x1="132.3" x2="132.3" y1="246.32" y2="258.00" stroke="#a0a0a0" stroke-width="1"/>
<rect x="102" y="256.8" width="30.2" height="1.1" fill="#217346"/>
<circle cx="150.4" cy="252.7" r="2.9" fill="none" stroke="#777" stroke-width="0.7"/>
<line x1="148.8" x2="152" y1="252.7" y2="252.7" stroke="#777" stroke-width="0.7"/>
<line x1="150.4" x2="150.4" y1="251.1" y2="254.3" stroke="#777" stroke-width="0.7"/>
<path d="M71.5 251 L70 252.8 L71.5 254.6" fill="none" stroke="#b0b0b0" stroke-width="0.7"/>
<path d="M82.5 251 L84 252.8 L82.5 254.6" fill="none" stroke="#b0b0b0" stroke-width="0.7"/>
<rect x="495.2" y="251.5" width="0.8" height="0.8" fill="#999"/>
<rect x="495.2" y="253.3" width="0.8" height="0.8" fill="#999"/>
<rect x="495.2" y="255.1" width="0.8" height="0.8" fill="#999"/>
<rect x="556.00" y="250.00" width="119.00" height="6.30" fill="#e4e4e4"/>
<rect x="502.4" y="249.8" width="51.8" height="6.4" rx="1" fill="#fff" stroke="#999" stroke-width="0.6"/>
<line x1="508.8" x2="508.8" y1="250.00" y2="256.00" stroke="#aaa" stroke-width="1"/>
<path d="M506.4 251.8 L504.6 253 L506.4 254.2Z" fill="#222"/>
<rect x="54.50" y="274.50" width="620.50" height="21.80" fill="#f2f2f2"/>
<line x1="54.5" x2="675" y1="274.90" y2="274.90" stroke="#d6d6d6" stroke-width="1"/>
<line x1="54.5" x2="675" y1="296.40" y2="296.40" stroke="#d2d2d2" stroke-width="1"/>
<line x1="55" x2="55" y1="274.50" y2="500.00" stroke="#dadada" stroke-width="1"/>
<rect x="113.60" y="275.20" width="39.00" height="21.40" fill="#ffffff"/>
<line x1="113.6" x2="113.6" y1="274.80" y2="296.00" stroke="#dadada" stroke-width="1"/>
<line x1="152.6" x2="152.6" y1="274.80" y2="296.00" stroke="#dadada" stroke-width="1"/>
</svg>
<div class="c" style="left:100.8px;top:28.00px;font-size:7.45px;font-style:italic;color:#222;line-height:8px">Income Statement 2019-2020</div>
<div class="c q" style="left:210.40px;top:36.72px;width:38.20px;text-align:center;font-size:6.3px"><span>Q1</span></div>
<div class="c q" style="left:248.60px;top:36.72px;width:29.00px;text-align:center;font-size:6.3px"><span>Q2</span></div>
<div class="c q" style="left:277.60px;top:36.72px;width:35.10px;text-align:center;font-size:6.3px"><span>Q3</span></div>
<div class="c q" style="left:312.70px;top:36.72px;width:28.10px;text-align:center;font-size:6.3px"><span>Q4</span></div>
<div class="c q" style="left:340.80px;top:36.72px;width:39.70px;text-align:center;font-size:6.3px"><span>2019</span></div>
<div class="c q" style="left:380.50px;top:36.72px;width:34.80px;text-align:center;font-size:6.3px"><span>Q1</span></div>
<div class="c q" style="left:415.30px;top:36.72px;width:35.20px;text-align:center;font-size:6.3px"><span>Q2</span></div>
<div class="c q" style="left:450.50px;top:36.72px;width:31.60px;text-align:center;font-size:6.3px"><span>Q3</span></div>
<div class="c q" style="left:482.10px;top:36.72px;width:33.60px;text-align:center;font-size:6.3px"><span>Q4</span></div>
<div class="c q" style="left:515.70px;top:36.72px;width:36.10px;text-align:center;font-size:6.3px"><span>2020</span></div>
<div class="c l b" style="left:100.9px;top:44.84px"><span>REVENUE</span></div>
<div class="c n b" style="left:210.40px;top:44.84px;width:37.10px"><span>$1,063,908</span></div>
<div class="c n b" style="left:248.60px;top:44.84px;width:27.90px"><span>$932,658</span></div>
<div class="c n b" style="left:277.60px;top:44.84px;width:34.00px"><span>$1,097,640</span></div>
<div class="c n b" style="left:312.70px;top:44.84px;width:27.00px"><span>$930,181</span></div>
<div class="c n b" style="left:340.80px;top:44.84px;width:38.60px"><span>$4,024,387</span></div>
<div class="c n b" style="left:380.50px;top:44.84px;width:33.70px"><span>$1,120,386</span></div>
<div class="c n b" style="left:415.30px;top:44.84px;width:34.10px"><span>$1,035,574</span></div>
<div class="c n b" style="left:450.50px;top:44.84px;width:30.50px"><span>$1,000,482</span></div>
<div class="c n b" style="left:482.10px;top:44.84px;width:32.50px"><span>$1,188,039</span></div>
<div class="c n b" style="left:515.70px;top:44.84px;width:35.00px"><span>$12,300,607</span></div>
<div class="c l" style="left:100.9px;top:53.26px"><span>Fixed COS</span></div>
<div class="c n" style="left:210.40px;top:53.26px;width:37.10px"><span>$0</span></div>
<div class="c n" style="left:248.60px;top:53.26px;width:27.90px"><span>$0</span></div>
<div class="c n" style="left:277.60px;top:53.26px;width:34.00px"><span>$0</span></div>
<div class="c n" style="left:312.70px;top:53.26px;width:27.00px"><span>$0</span></div>
<div class="c n" style="left:340.80px;top:53.26px;width:38.60px"><span>$0</span></div>
<div class="c n" style="left:380.50px;top:53.26px;width:33.70px"><span>$0</span></div>
<div class="c n" style="left:415.30px;top:53.26px;width:34.10px"><span>$0</span></div>
<div class="c n" style="left:450.50px;top:53.26px;width:30.50px"><span>$0</span></div>
<div class="c n" style="left:482.10px;top:53.26px;width:32.50px"><span>$0</span></div>
<div class="c n" style="left:515.70px;top:53.26px;width:35.00px"><span>$0</span></div>
<div class="c l" style="left:100.9px;top:61.68px"><span>Variable COS</span></div>
<div class="c n" style="left:210.40px;top:61.68px;width:37.10px"><span>$608,335</span></div>
<div class="c n" style="left:248.60px;top:61.68px;width:27.90px"><span>$495,069</span></div>
<div class="c n" style="left:277.60px;top:61.68px;width:34.00px"><span>$584,449</span></div>
<div class="c n" style="left:312.70px;top:61.68px;width:27.00px"><span>$512,606</span></div>
<div class="c n" style="left:340.80px;top:61.68px;width:38.60px"><span>$2,200,459</span></div>
<div class="c n" style="left:380.50px;top:61.68px;width:33.70px"><span>$606,953</span></div>
<div class="c n" style="left:415.30px;top:61.68px;width:34.10px"><span>$621,042</span></div>
<div class="c n" style="left:450.50px;top:61.68px;width:30.50px"><span>$559,003</span></div>
<div class="c n" style="left:482.10px;top:61.68px;width:32.50px"><span>$648,405</span></div>
<div class="c n" style="left:515.70px;top:61.68px;width:35.00px"><span>$6,918,979</span></div>
<div class="c l" style="left:100.9px;top:70.10px"><span>Depreciation</span></div>
<div class="c n" style="left:210.40px;top:70.10px;width:37.10px"><span>$9,924</span></div>
<div class="c n" style="left:248.60px;top:70.10px;width:27.90px"><span>$9,987</span></div>
<div class="c n" style="left:277.60px;top:70.10px;width:34.00px"><span>$9,632</span></div>
<div class="c n" style="left:312.70px;top:70.10px;width:27.00px"><span>$9,897</span></div>
<div class="c n" style="left:340.80px;top:70.10px;width:38.60px"><span>$39,440</span></div>
<div class="c n" style="left:380.50px;top:70.10px;width:33.70px"><span>$7,395</span></div>
<div class="c n" style="left:415.30px;top:70.10px;width:34.10px"><span>$13,524</span></div>
<div class="c n" style="left:450.50px;top:70.10px;width:30.50px"><span>$28,620</span></div>
<div class="c n" style="left:482.10px;top:70.10px;width:32.50px"><span>$10,780</span></div>
<div class="c n" style="left:515.70px;top:70.10px;width:35.00px"><span>$129,195</span></div>
<div class="c l b" style="left:100.9px;top:78.52px"><span>Cost of Sales</span></div>
<div class="c n b" style="left:210.40px;top:78.52px;width:37.10px"><span>$618,259</span></div>
<div class="c n b" style="left:248.60px;top:78.52px;width:27.90px"><span>$505,056</span></div>
<div class="c n b" style="left:277.60px;top:78.52px;width:34.00px"><span>$594,081</span></div>
<div class="c n b" style="left:312.70px;top:78.52px;width:27.00px"><span>$522,503</span></div>
<div class="c n b" style="left:340.80px;top:78.52px;width:38.60px"><span>$2,239,899</span></div>
<div class="c n b" style="left:380.50px;top:78.52px;width:33.70px"><span>$614,348</span></div>
<div class="c n b" style="left:415.30px;top:78.52px;width:34.10px"><span>$634,566</span></div>
<div class="c n b" style="left:450.50px;top:78.52px;width:30.50px"><span>$587,623</span></div>
<div class="c n b" style="left:482.10px;top:78.52px;width:32.50px"><span>$659,185</span></div>
<div class="c n b" style="left:515.70px;top:78.52px;width:35.00px"><span>$7,048,174</span></div>
<div class="c l b" style="left:100.9px;top:86.94px"><span>GROSS PROFIT</span></div>
<div class="c n b" style="left:210.40px;top:86.94px;width:37.10px"><span>$445,649</span></div>
<div class="c n b" style="left:248.60px;top:86.94px;width:27.90px"><span>$427,602</span></div>
<div class="c n b" style="left:277.60px;top:86.94px;width:34.00px"><span>$503,559</span></div>
<div class="c n b" style="left:312.70px;top:86.94px;width:27.00px"><span>$407,678</span></div>
<div class="c n b" style="left:340.80px;top:86.94px;width:38.60px"><span>$1,784,488</span></div>
<div class="c n b" style="left:380.50px;top:86.94px;width:33.70px"><span>$506,038</span></div>
<div class="c n b" style="left:415.30px;top:86.94px;width:34.10px"><span>$401,008</span></div>
<div class="c n b" style="left:450.50px;top:86.94px;width:30.50px"><span>$412,859</span></div>
<div class="c n b" style="left:482.10px;top:86.94px;width:32.50px"><span>$528,854</span></div>
<div class="c n b" style="left:515.70px;top:86.94px;width:35.00px"><span>$5,252,433</span></div>
<div class="c l" style="left:100.9px;top:95.36px"><span>Fixed Expenses</span></div>
<div class="c n" style="left:210.40px;top:95.36px;width:37.10px"><span>$308,361</span></div>
<div class="c n" style="left:248.60px;top:95.36px;width:27.90px"><span>$302,497</span></div>
<div class="c n" style="left:277.60px;top:95.36px;width:34.00px"><span>$291,258</span></div>
<div class="c n" style="left:312.70px;top:95.36px;width:27.00px"><span>$318,776</span></div>
<div class="c n" style="left:340.80px;top:95.36px;width:38.60px"><span>$1,220,892</span></div>
<div class="c n" style="left:380.50px;top:95.36px;width:33.70px"><span>$341,003</span></div>
<div class="c n" style="left:415.30px;top:95.36px;width:34.10px"><span>$314,875</span></div>
<div class="c n" style="left:450.50px;top:95.36px;width:30.50px"><span>$350,506</span></div>
<div class="c n" style="left:482.10px;top:95.36px;width:32.50px"><span>$324,738</span></div>
<div class="c n" style="left:515.70px;top:95.36px;width:35.00px"><span>$4,020,657</span></div>
<div class="c l" style="left:100.9px;top:103.78px"><span>Variable Expenses</span></div>
<div class="c n" style="left:210.40px;top:103.78px;width:37.10px"><span>$78,137</span></div>
<div class="c n" style="left:248.60px;top:103.78px;width:27.90px"><span>$81,905</span></div>
<div class="c n" style="left:277.60px;top:103.78px;width:34.00px"><span>$117,711</span></div>
<div class="c n" style="left:312.70px;top:103.78px;width:27.00px"><span>$73,710</span></div>
<div class="c n" style="left:340.80px;top:103.78px;width:38.60px"><span>$351,463</span></div>
<div class="c n" style="left:380.50px;top:103.78px;width:33.70px"><span>$92,156</span></div>
<div class="c n" style="left:415.30px;top:103.78px;width:34.10px"><span>$74,821</span></div>
<div class="c n" style="left:450.50px;top:103.78px;width:30.50px"><span>$85,851</span></div>
<div class="c n" style="left:482.10px;top:103.78px;width:32.50px"><span>$91,929</span></div>
<div class="c n" style="left:515.70px;top:103.78px;width:35.00px"><span>$956,213</span></div>
<div class="c l b" style="left:100.9px;top:112.20px"><span>Expenses</span></div>
<div class="c n b" style="left:210.40px;top:112.20px;width:37.10px"><span>$386,498</span></div>
<div class="c n b" style="left:248.60px;top:112.20px;width:27.90px"><span>$384,402</span></div>
<div class="c n b" style="left:277.60px;top:112.20px;width:34.00px"><span>$408,969</span></div>
<div class="c n b" style="left:312.70px;top:112.20px;width:27.00px"><span>$392,486</span></div>
<div class="c n b" style="left:340.80px;top:112.20px;width:38.60px"><span>$1,572,355</span></div>
<div class="c n b" style="left:380.50px;top:112.20px;width:33.70px"><span>$433,159</span></div>
<div class="c n b" style="left:415.30px;top:112.20px;width:34.10px"><span>$389,696</span></div>
<div class="c n b" style="left:450.50px;top:112.20px;width:30.50px"><span>$436,357</span></div>
<div class="c n b" style="left:482.10px;top:112.20px;width:32.50px"><span>$416,667</span></div>
<div class="c n b" style="left:515.70px;top:112.20px;width:35.00px"><span>$4,976,870</span></div>
<div class="c l b" style="left:100.9px;top:120.62px"><span>OPERATING PROFIT</span></div>
<div class="c n b" style="left:210.40px;top:120.62px;width:37.10px"><span>$59,151</span></div>
<div class="c n b" style="left:248.60px;top:120.62px;width:27.90px"><span>$43,200</span></div>
<div class="c n b" style="left:277.60px;top:120.62px;width:34.00px"><span>$94,590</span></div>
<div class="c n b" style="left:312.70px;top:120.62px;width:27.00px"><span>$15,192</span></div>
<div class="c n b" style="left:340.80px;top:120.62px;width:38.60px"><span>$212,133</span></div>
<div class="c n b" style="left:380.50px;top:120.62px;width:33.70px"><span>$72,879</span></div>
<div class="c n b" style="left:415.30px;top:120.62px;width:34.10px"><span>$11,312</span></div>
<div class="c n b" style="left:450.50px;top:120.62px;width:30.50px"><span>($23,498)</span></div>
<div class="c n b" style="left:482.10px;top:120.62px;width:32.50px"><span>$112,187</span></div>
<div class="c n b" style="left:515.70px;top:120.62px;width:35.00px"><span>$275,563</span></div>
<div class="c l" style="left:100.9px;top:129.04px"><span>Other Income</span></div>
<div class="c n" style="left:210.40px;top:129.04px;width:37.10px"><span>$0</span></div>
<div class="c n" style="left:248.60px;top:129.04px;width:27.90px"><span>$0</span></div>
<div class="c n" style="left:277.60px;top:129.04px;width:34.00px"><span>$0</span></div>
<div class="c n" style="left:312.70px;top:129.04px;width:27.00px"><span>$0</span></div>
<div class="c n" style="left:340.80px;top:129.04px;width:38.60px"><span>$0</span></div>
<div class="c n" style="left:380.50px;top:129.04px;width:33.70px"><span>$0</span></div>
<div class="c n" style="left:415.30px;top:129.04px;width:34.10px"><span>$0</span></div>
<div class="c n" style="left:450.50px;top:129.04px;width:30.50px"><span>$0</span></div>
<div class="c n" style="left:482.10px;top:129.04px;width:32.50px"><span>$0</span></div>
<div class="c n" style="left:515.70px;top:129.04px;width:35.00px"><span>$0</span></div>
<div class="c l" style="left:100.9px;top:137.46px"><span>Other Expenses</span></div>
<div class="c n" style="left:210.40px;top:137.46px;width:37.10px"><span>$0</span></div>
<div class="c n" style="left:248.60px;top:137.46px;width:27.90px"><span>$0</span></div>
<div class="c n" style="left:277.60px;top:137.46px;width:34.00px"><span>$0</span></div>
<div class="c n" style="left:312.70px;top:137.46px;width:27.00px"><span>$0</span></div>
<div class="c n" style="left:340.80px;top:137.46px;width:38.60px"><span>$0</span></div>
<div class="c n" style="left:380.50px;top:137.46px;width:33.70px"><span>$0</span></div>
<div class="c n" style="left:415.30px;top:137.46px;width:34.10px"><span>$0</span></div>
<div class="c n" style="left:450.50px;top:137.46px;width:30.50px"><span>$0</span></div>
<div class="c n" style="left:482.10px;top:137.46px;width:32.50px"><span>$0</span></div>
<div class="c n" style="left:515.70px;top:137.46px;width:35.00px"><span>$0</span></div>
<div class="c l b" style="left:100.9px;top:145.88px"><span>EARNINGS BEFORE INTEREST &amp; TAX</span></div>
<div class="c n b" style="left:210.40px;top:145.88px;width:37.10px"><span>$59,151</span></div>
<div class="c n b" style="left:248.60px;top:145.88px;width:27.90px"><span>$43,200</span></div>
<div class="c n b" style="left:277.60px;top:145.88px;width:34.00px"><span>$94,590</span></div>
<div class="c n b" style="left:312.70px;top:145.88px;width:27.00px"><span>$15,192</span></div>
<div class="c n b" style="left:340.80px;top:145.88px;width:38.60px"><span>$212,133</span></div>
<div class="c n b" style="left:380.50px;top:145.88px;width:33.70px"><span>$72,879</span></div>
<div class="c n b" style="left:415.30px;top:145.88px;width:34.10px"><span>$11,312</span></div>
<div class="c n b" style="left:450.50px;top:145.88px;width:30.50px"><span>($23,498)</span></div>
<div class="c n b" style="left:482.10px;top:145.88px;width:32.50px"><span>$112,187</span></div>
<div class="c n b" style="left:515.70px;top:145.88px;width:35.00px"><span>$275,563</span></div>
<div class="c l" style="left:100.9px;top:154.30px"><span>Interest Income</span></div>
<div class="c n" style="left:210.40px;top:154.30px;width:37.10px"><span>($926)</span></div>
<div class="c n" style="left:248.60px;top:154.30px;width:27.90px"><span>$297</span></div>
<div class="c n" style="left:277.60px;top:154.30px;width:34.00px"><span>$0</span></div>
<div class="c n" style="left:312.70px;top:154.30px;width:27.00px"><span>$1,805</span></div>
<div class="c n" style="left:340.80px;top:154.30px;width:38.60px"><span>$1,176</span></div>
<div class="c n" style="left:380.50px;top:154.30px;width:33.70px"><span>$125</span></div>
<div class="c n" style="left:415.30px;top:154.30px;width:34.10px"><span>$876</span></div>
<div class="c n" style="left:450.50px;top:154.30px;width:30.50px"><span>$158</span></div>
<div class="c n" style="left:482.10px;top:154.30px;width:32.50px"><span>$253</span></div>
<div class="c n" style="left:515.70px;top:154.30px;width:35.00px"><span>($5,505)</span></div>
<div class="c l" style="left:100.9px;top:162.72px"><span>Interest Expenses</span></div>
<div class="c n" style="left:210.40px;top:162.72px;width:37.10px"><span>$22,622</span></div>
<div class="c n" style="left:248.60px;top:162.72px;width:27.90px"><span>$22,427</span></div>
<div class="c n" style="left:277.60px;top:162.72px;width:34.00px"><span>$23,844</span></div>
<div class="c n" style="left:312.70px;top:162.72px;width:27.00px"><span>$20,789</span></div>
<div class="c n" style="left:340.80px;top:162.72px;width:38.60px"><span>$89,682</span></div>
<div class="c n" style="left:380.50px;top:162.72px;width:33.70px"><span>$27,282</span></div>
<div class="c n" style="left:415.30px;top:162.72px;width:34.10px"><span>$34,184</span></div>
<div class="c n" style="left:450.50px;top:162.72px;width:30.50px"><span>$28,150</span></div>
<div class="c n" style="left:482.10px;top:162.72px;width:32.50px"><span>$25,549</span></div>
<div class="c n" style="left:515.70px;top:162.72px;width:35.00px"><span>$301,814</span></div>
<div class="c l" style="left:100.9px;top:171.14px"><span>Tax Expenses</span></div>
<div class="c n" style="left:210.40px;top:171.14px;width:37.10px"><span>$17,442</span></div>
<div class="c n" style="left:248.60px;top:171.14px;width:27.90px"><span>$3,864</span></div>
<div class="c n" style="left:277.60px;top:171.14px;width:34.00px"><span>$13,939</span></div>
<div class="c n" style="left:312.70px;top:171.14px;width:27.00px"><span>$0</span></div>
<div class="c n" style="left:340.80px;top:171.14px;width:38.60px"><span>$35,245</span></div>
<div class="c n" style="left:380.50px;top:171.14px;width:33.70px"><span>$0</span></div>
<div class="c n" style="left:415.30px;top:171.14px;width:34.10px"><span>$0</span></div>
<div class="c n" style="left:450.50px;top:171.14px;width:30.50px"><span>$0</span></div>
<div class="c n" style="left:482.10px;top:171.14px;width:32.50px"><span>$0</span></div>
<div class="c n" style="left:515.70px;top:171.14px;width:35.00px"><span>$58,610</span></div>
<div class="c l b" style="left:100.9px;top:179.56px"><span>EARNINGS AFTER TAX</span></div>
<div class="c n b" style="left:210.40px;top:179.56px;width:37.10px"><span>$20,013</span></div>
<div class="c n b" style="left:248.60px;top:179.56px;width:27.90px"><span>$16,612</span></div>
<div class="c n b" style="left:277.60px;top:179.56px;width:34.00px"><span>$56,807</span></div>
<div class="c n b" style="left:312.70px;top:179.56px;width:27.00px"><span>($7,402)</span></div>
<div class="c n b" style="left:340.80px;top:179.56px;width:38.60px"><span>$86,030</span></div>
<div class="c n b" style="left:380.50px;top:179.56px;width:33.70px"><span>$45,472</span></div>
<div class="c n b" style="left:415.30px;top:179.56px;width:34.10px"><span>($23,748)</span></div>
<div class="c n b" style="left:450.50px;top:179.56px;width:30.50px"><span>($51,806)</span></div>
<div class="c n b" style="left:482.10px;top:179.56px;width:32.50px"><span>$86,385</span></div>
<div class="c n b" style="left:515.70px;top:179.56px;width:35.00px"><span>($79,356)</span></div>
<div class="c l" style="left:100.9px;top:187.98px"><span>Adjustments</span></div>
<div class="c n" style="left:210.40px;top:187.98px;width:37.10px"><span>$0</span></div>
<div class="c n" style="left:248.60px;top:187.98px;width:27.90px"><span>$0</span></div>
<div class="c n" style="left:277.60px;top:187.98px;width:34.00px"><span>$0</span></div>
<div class="c n" style="left:312.70px;top:187.98px;width:27.00px"><span>$0</span></div>
<div class="c n" style="left:340.80px;top:187.98px;width:38.60px"><span>$0</span></div>
<div class="c n" style="left:380.50px;top:187.98px;width:33.70px"><span>$8,138</span></div>
<div class="c n" style="left:415.30px;top:187.98px;width:34.10px"><span>($4,495)</span></div>
<div class="c n" style="left:450.50px;top:187.98px;width:30.50px"><span>$11,147</span></div>
<div class="c n" style="left:482.10px;top:187.98px;width:32.50px"><span>$5,970</span></div>
<div class="c n" style="left:515.70px;top:187.98px;width:35.00px"><span>$371,926</span></div>
<div class="c l b" style="left:100.9px;top:196.40px"><span>NET INCOME</span></div>
<div class="c n b" style="left:210.40px;top:196.40px;width:37.10px"><span>$20,013</span></div>
<div class="c n b" style="left:248.60px;top:196.40px;width:27.90px"><span>$16,612</span></div>
<div class="c n b" style="left:277.60px;top:196.40px;width:34.00px"><span>$56,807</span></div>
<div class="c n b" style="left:312.70px;top:196.40px;width:27.00px"><span>($7,402)</span></div>
<div class="c n b" style="left:340.80px;top:196.40px;width:38.60px"><span>$86,030</span></div>
<div class="c n b" style="left:380.50px;top:196.40px;width:33.70px"><span>$37,334</span></div>
<div class="c n b" style="left:415.30px;top:196.40px;width:34.10px"><span>($19,253)</span></div>
<div class="c n b" style="left:450.50px;top:196.40px;width:30.50px"><span>($62,953)</span></div>
<div class="c n b" style="left:482.10px;top:196.40px;width:32.50px"><span>$80,415</span></div>
<div class="c n b" style="left:515.70px;top:196.40px;width:35.00px"><span>($451,282)</span></div>
<div class="c l" style="left:100.9px;top:204.82px"><span>Dividends</span></div>
<div class="c n" style="left:210.40px;top:204.82px;width:37.10px"><span>$20,088</span></div>
<div class="c n" style="left:248.60px;top:204.82px;width:27.90px"><span>$25,514</span></div>
<div class="c n" style="left:277.60px;top:204.82px;width:34.00px"><span>$16,403</span></div>
<div class="c n" style="left:312.70px;top:204.82px;width:27.00px"><span>$10,491</span></div>
<div class="c n" style="left:340.80px;top:204.82px;width:38.60px"><span>$72,496</span></div>
<div class="c n" style="left:380.50px;top:204.82px;width:33.70px"><span>$18,835</span></div>
<div class="c n" style="left:415.30px;top:204.82px;width:34.10px"><span>$29,920</span></div>
<div class="c n" style="left:450.50px;top:204.82px;width:30.50px"><span>$30,576</span></div>
<div class="c n" style="left:482.10px;top:204.82px;width:32.50px"><span>$12,296</span></div>
<div class="c n" style="left:515.70px;top:204.82px;width:35.00px"><span>$280,949</span></div>
<div class="c l b" style="left:100.9px;top:213.24px"><span>RETAINED INCOME</span></div>
<div class="c n b" style="left:210.40px;top:213.24px;width:37.10px"><span>($75)</span></div>
<div class="c n b" style="left:248.60px;top:213.24px;width:27.90px"><span>($8,902)</span></div>
<div class="c n b" style="left:277.60px;top:213.24px;width:34.00px"><span>$40,404</span></div>
<div class="c n b" style="left:312.70px;top:213.24px;width:27.00px"><span>($17,893)</span></div>
<div class="c n b" style="left:340.80px;top:213.24px;width:38.60px"><span>$13,534</span></div>
<div class="c n b" style="left:380.50px;top:213.24px;width:33.70px"><span>$18,499</span></div>
<div class="c n b" style="left:415.30px;top:213.24px;width:34.10px"><span>($49,173)</span></div>
<div class="c n b" style="left:450.50px;top:213.24px;width:30.50px"><span>($93,529)</span></div>
<div class="c n b" style="left:482.10px;top:213.24px;width:32.50px"><span>$68,119</span></div>
<div class="c n b" style="left:515.70px;top:213.24px;width:35.00px"><span>($732,231)</span></div>
<div class="c q" style="left:82.5px;top:27.90px;width:17px;text-align:center;color:#3a3a3a;font-size:6.4px;-webkit-text-stroke:0"><span>1</span></div>
<div class="c q" style="left:82.5px;top:36.32px;width:17px;text-align:center;color:#3a3a3a;font-size:6.4px;-webkit-text-stroke:0"><span>2</span></div>
<div class="c q" style="left:82.5px;top:44.74px;width:17px;text-align:center;color:#3a3a3a;font-size:6.4px;-webkit-text-stroke:0"><span>3</span></div>
<div class="c q" style="left:82.5px;top:53.16px;width:17px;text-align:center;color:#3a3a3a;font-size:6.4px;-webkit-text-stroke:0"><span>4</span></div>
<div class="c q" style="left:82.5px;top:61.58px;width:17px;text-align:center;color:#3a3a3a;font-size:6.4px;-webkit-text-stroke:0"><span>5</span></div>
<div class="c q" style="left:82.5px;top:70.00px;width:17px;text-align:center;color:#3a3a3a;font-size:6.4px;-webkit-text-stroke:0"><span>6</span></div>
<div class="c q" style="left:82.5px;top:78.42px;width:17px;text-align:center;color:#3a3a3a;font-size:6.4px;-webkit-text-stroke:0"><span>7</span></div>
<div class="c q" style="left:82.5px;top:86.84px;width:17px;text-align:center;color:#3a3a3a;font-size:6.4px;-webkit-text-stroke:0"><span>8</span></div>
<div class="c q" style="left:82.5px;top:95.26px;width:17px;text-align:center;color:#3a3a3a;font-size:6.4px;-webkit-text-stroke:0"><span>9</span></div>
<div class="c q" style="left:82.5px;top:103.68px;width:17px;text-align:center;color:#3a3a3a;font-size:6.4px;-webkit-text-stroke:0"><span>10</span></div>
<div class="c q" style="left:82.5px;top:112.10px;width:17px;text-align:center;color:#3a3a3a;font-size:6.4px;-webkit-text-stroke:0"><span>11</span></div>
<div class="c q" style="left:82.5px;top:120.52px;width:17px;text-align:center;color:#3a3a3a;font-size:6.4px;-webkit-text-stroke:0"><span>12</span></div>
<div class="c q" style="left:82.5px;top:128.94px;width:17px;text-align:center;color:#3a3a3a;font-size:6.4px;-webkit-text-stroke:0"><span>13</span></div>
<div class="c q" style="left:82.5px;top:137.36px;width:17px;text-align:center;color:#3a3a3a;font-size:6.4px;-webkit-text-stroke:0"><span>14</span></div>
<div class="c q" style="left:82.5px;top:145.78px;width:17px;text-align:center;color:#3a3a3a;font-size:6.4px;-webkit-text-stroke:0"><span>15</span></div>
<div class="c q" style="left:82.5px;top:154.20px;width:17px;text-align:center;color:#3a3a3a;font-size:6.4px;-webkit-text-stroke:0"><span>16</span></div>
<div class="c q" style="left:82.5px;top:162.62px;width:17px;text-align:center;color:#3a3a3a;font-size:6.4px;-webkit-text-stroke:0"><span>17</span></div>
<div class="c q" style="left:82.5px;top:171.04px;width:17px;text-align:center;color:#3a3a3a;font-size:6.4px;-webkit-text-stroke:0"><span>18</span></div>
<div class="c q" style="left:82.5px;top:179.46px;width:17px;text-align:center;color:#3a3a3a;font-size:6.4px;-webkit-text-stroke:0"><span>19</span></div>
<div class="c q" style="left:82.5px;top:187.88px;width:17px;text-align:center;color:#3a3a3a;font-size:6.4px;-webkit-text-stroke:0"><span>20</span></div>
<div class="c q" style="left:82.5px;top:196.30px;width:17px;text-align:center;color:#3a3a3a;font-size:6.4px;-webkit-text-stroke:0"><span>21</span></div>
<div class="c q" style="left:82.5px;top:204.72px;width:17px;text-align:center;color:#3a3a3a;font-size:6.4px;-webkit-text-stroke:0"><span>22</span></div>
<div class="c q" style="left:82.5px;top:213.14px;width:17px;text-align:center;color:#217346;font-size:6.4px;-webkit-text-stroke:0"><span>23</span></div>
<div class="c q" style="left:82.5px;top:221.56px;width:17px;text-align:center;color:#3a3a3a;font-size:6.4px;-webkit-text-stroke:0"><span>24</span></div>
<div class="c q" style="left:82.5px;top:229.98px;width:17px;text-align:center;color:#3a3a3a;font-size:6.4px;-webkit-text-stroke:0"><span>25</span></div>
<div class="c q" style="left:82.5px;top:238.40px;width:17px;text-align:center;color:#3a3a3a;font-size:6.4px;-webkit-text-stroke:0"><span>26</span></div>
<div class="ab" style="left:107.5px;top:248.6px;font-size:6.6px;line-height:7.6px;color:#217346;white-space:nowrap;font-weight:bold;transform:scaleX(0.8778);transform-origin:0 50%;">Sheet1</div>
<div class="c" style="left:659.8px;top:227px;font-size:6.8px;color:#999;-webkit-text-stroke:0;transform:scaleX(.86);transform-origin:0 50%">Power</div>
<div class="ab" style="left:63.7px;top:281.0px;font-size:8.4px;line-height:9.4px;color:#777;white-space:nowrap;font-weight:normal;transform:scaleX(0.9591);transform-origin:0 50%;">Description</div>
<div class="ab" style="left:122.9px;top:281.0px;font-size:8.4px;line-height:9.4px;color:#6f98d4;white-space:nowrap;font-weight:normal;transform:scaleX(0.9101);transform-origin:0 50%;">app.js</div>
<div class="ab" style="left:161.6px;top:281.0px;font-size:8.4px;line-height:9.4px;color:#777;white-space:nowrap;font-weight:normal;transform:scaleX(0.9847);transform-origin:0 50%;">index.html</div>
<div class="ab" style="left:217.1px;top:281.0px;font-size:8.4px;line-height:9.4px;color:#777;white-space:nowrap;font-weight:normal;transform:scaleX(0.9253);transform-origin:0 50%;">data.js</div>
<div class="ab" style="left:257.8px;top:281.0px;font-size:8.4px;line-height:9.4px;color:#777;white-space:nowrap;font-weight:normal;transform:scaleX(0.8845);transform-origin:0 50%;">styles.css</div>
<div class="ab" style="left:83.6px;top:422.40px;width:591.4px;height:8.40px;border-top:0.8px solid #eee;border-bottom:0.8px solid #eee"></div>
<svg class="ab" style="left:0;top:0" width="675" height="500">
<line x1="83.60" x2="83.60" y1="305.90" y2="314.30" stroke="#e2e2e2" stroke-width="0.7"/>
<line x1="97.22" x2="97.22" y1="305.90" y2="314.30" stroke="#e2e2e2" stroke-width="0.7"/>
<line x1="83.60" x2="83.60" y1="314.30" y2="322.70" stroke="#e2e2e2" stroke-width="0.7"/>
<line x1="97.22" x2="97.22" y1="314.30" y2="322.70" stroke="#e2e2e2" stroke-width="0.7"/>
<line x1="110.84" x2="110.84" y1="314.30" y2="322.70" stroke="#e2e2e2" stroke-width="0.7"/>
<line x1="83.60" x2="83.60" y1="322.70" y2="331.10" stroke="#e2e2e2" stroke-width="0.7"/>
<line x1="97.22" x2="97.22" y1="322.70" y2="331.10" stroke="#e2e2e2" stroke-width="0.7"/>
<line x1="110.84" x2="110.84" y1="322.70" y2="331.10" stroke="#e2e2e2" stroke-width="0.7"/>
<line x1="83.60" x2="83.60" y1="331.10" y2="339.50" stroke="#e2e2e2" stroke-width="0.7"/>
<line x1="97.22" x2="97.22" y1="331.10" y2="339.50" stroke="#e2e2e2" stroke-width="0.7"/>
<line x1="83.60" x2="83.60" y1="339.50" y2="347.90" stroke="#e2e2e2" stroke-width="0.7"/>
<line x1="97.22" x2="97.22" y1="339.50" y2="347.90" stroke="#e2e2e2" stroke-width="0.7"/>
<line x1="83.60" x2="83.60" y1="347.90" y2="356.30" stroke="#e2e2e2" stroke-width="0.7"/>
<line x1="97.22" x2="97.22" y1="347.90" y2="356.30" stroke="#e2e2e2" stroke-width="0.7"/>
<line x1="83.60" x2="83.60" y1="356.30" y2="364.70" stroke="#e2e2e2" stroke-width="0.7"/>
<line x1="97.22" x2="97.22" y1="356.30" y2="364.70" stroke="#e2e2e2" stroke-width="0.7"/>
<line x1="110.84" x2="110.84" y1="356.30" y2="364.70" stroke="#e2e2e2" stroke-width="0.7"/>
<line x1="83.60" x2="83.60" y1="364.70" y2="373.10" stroke="#e2e2e2" stroke-width="0.7"/>
<line x1="97.22" x2="97.22" y1="364.70" y2="373.10" stroke="#e2e2e2" stroke-width="0.7"/>
<line x1="110.84" x2="110.84" y1="364.70" y2="373.10" stroke="#e2e2e2" stroke-width="0.7"/>
<line x1="124.46" x2="124.46" y1="364.70" y2="373.10" stroke="#a8a8a8" stroke-width="0.7"/>
<line x1="83.60" x2="83.60" y1="373.10" y2="381.50" stroke="#e2e2e2" stroke-width="0.7"/>
<line x1="97.22" x2="97.22" y1="373.10" y2="381.50" stroke="#e2e2e2" stroke-width="0.7"/>
<line x1="110.84" x2="110.84" y1="373.10" y2="381.50" stroke="#e2e2e2" stroke-width="0.7"/>
<line x1="124.46" x2="124.46" y1="373.10" y2="381.50" stroke="#a8a8a8" stroke-width="0.7"/>
<line x1="83.60" x2="83.60" y1="381.50" y2="389.90" stroke="#e2e2e2" stroke-width="0.7"/>
<line x1="97.22" x2="97.22" y1="381.50" y2="389.90" stroke="#e2e2e2" stroke-width="0.7"/>
<line x1="110.84" x2="110.84" y1="381.50" y2="389.90" stroke="#e2e2e2" stroke-width="0.7"/>
<line x1="124.46" x2="124.46" y1="381.50" y2="389.90" stroke="#a8a8a8" stroke-width="0.7"/>
<line x1="83.60" x2="83.60" y1="389.90" y2="398.30" stroke="#e2e2e2" stroke-width="0.7"/>
<line x1="97.22" x2="97.22" y1="389.90" y2="398.30" stroke="#e2e2e2" stroke-width="0.7"/>
<line x1="110.84" x2="110.84" y1="389.90" y2="398.30" stroke="#e2e2e2" stroke-width="0.7"/>
<line x1="124.46" x2="124.46" y1="389.90" y2="398.30" stroke="#a8a8a8" stroke-width="0.7"/>
<line x1="83.60" x2="83.60" y1="398.30" y2="406.70" stroke="#e2e2e2" stroke-width="0.7"/>
<line x1="97.22" x2="97.22" y1="398.30" y2="406.70" stroke="#e2e2e2" stroke-width="0.7"/>
<line x1="110.84" x2="110.84" y1="398.30" y2="406.70" stroke="#e2e2e2" stroke-width="0.7"/>
<line x1="124.46" x2="124.46" y1="398.30" y2="406.70" stroke="#a8a8a8" stroke-width="0.7"/>
<line x1="83.60" x2="83.60" y1="406.70" y2="415.10" stroke="#e2e2e2" stroke-width="0.7"/>
<line x1="97.22" x2="97.22" y1="406.70" y2="415.10" stroke="#e2e2e2" stroke-width="0.7"/>
<line x1="110.84" x2="110.84" y1="406.70" y2="415.10" stroke="#e2e2e2" stroke-width="0.7"/>
<line x1="124.46" x2="124.46" y1="406.70" y2="415.10" stroke="#a8a8a8" stroke-width="0.7"/>
<line x1="83.60" x2="83.60" y1="415.10" y2="423.50" stroke="#e2e2e2" stroke-width="0.7"/>
<line x1="97.22" x2="97.22" y1="415.10" y2="423.50" stroke="#e2e2e2" stroke-width="0.7"/>
<line x1="110.84" x2="110.84" y1="415.10" y2="423.50" stroke="#e2e2e2" stroke-width="0.7"/>
<line x1="124.46" x2="124.46" y1="415.10" y2="423.50" stroke="#a8a8a8" stroke-width="0.7"/>
<line x1="83.60" x2="83.60" y1="423.50" y2="431.90" stroke="#e2e2e2" stroke-width="0.7"/>
<line x1="97.22" x2="97.22" y1="423.50" y2="431.90" stroke="#e2e2e2" stroke-width="0.7"/>
<line x1="110.84" x2="110.84" y1="423.50" y2="431.90" stroke="#e2e2e2" stroke-width="0.7"/>
<line x1="124.46" x2="124.46" y1="423.50" y2="431.90" stroke="#a8a8a8" stroke-width="0.7"/>
<line x1="83.60" x2="83.60" y1="431.90" y2="440.30" stroke="#e2e2e2" stroke-width="0.7"/>
<line x1="97.22" x2="97.22" y1="431.90" y2="440.30" stroke="#e2e2e2" stroke-width="0.7"/>
<line x1="110.84" x2="110.84" y1="431.90" y2="440.30" stroke="#e2e2e2" stroke-width="0.7"/>
<line x1="124.46" x2="124.46" y1="431.90" y2="440.30" stroke="#a8a8a8" stroke-width="0.7"/>
<line x1="83.60" x2="83.60" y1="440.30" y2="448.70" stroke="#e2e2e2" stroke-width="0.7"/>
<line x1="97.22" x2="97.22" y1="440.30" y2="448.70" stroke="#e2e2e2" stroke-width="0.7"/>
<line x1="110.84" x2="110.84" y1="440.30" y2="448.70" stroke="#e2e2e2" stroke-width="0.7"/>
<line x1="124.46" x2="124.46" y1="440.30" y2="448.70" stroke="#a8a8a8" stroke-width="0.7"/>
<line x1="83.60" x2="83.60" y1="448.70" y2="457.10" stroke="#e2e2e2" stroke-width="0.7"/>
<line x1="97.22" x2="97.22" y1="448.70" y2="457.10" stroke="#e2e2e2" stroke-width="0.7"/>
<line x1="110.84" x2="110.84" y1="448.70" y2="457.10" stroke="#e2e2e2" stroke-width="0.7"/>
<line x1="124.46" x2="124.46" y1="448.70" y2="457.10" stroke="#a8a8a8" stroke-width="0.7"/>
<line x1="83.60" x2="83.60" y1="457.10" y2="465.50" stroke="#e2e2e2" stroke-width="0.7"/>
<line x1="97.22" x2="97.22" y1="457.10" y2="465.50" stroke="#e2e2e2" stroke-width="0.7"/>
<line x1="110.84" x2="110.84" y1="457.10" y2="465.50" stroke="#e2e2e2" stroke-width="0.7"/>
<line x1="124.46" x2="124.46" y1="457.10" y2="465.50" stroke="#a8a8a8" stroke-width="0.7"/>
<line x1="83.60" x2="83.60" y1="465.50" y2="473.90" stroke="#e2e2e2" stroke-width="0.7"/>
<line x1="97.22" x2="97.22" y1="465.50" y2="473.90" stroke="#e2e2e2" stroke-width="0.7"/>
<line x1="110.84" x2="110.84" y1="465.50" y2="473.90" stroke="#e2e2e2" stroke-width="0.7"/>
<line x1="124.46" x2="124.46" y1="465.50" y2="473.90" stroke="#a8a8a8" stroke-width="0.7"/>
<line x1="83.60" x2="83.60" y1="473.90" y2="482.30" stroke="#e2e2e2" stroke-width="0.7"/>
<line x1="97.22" x2="97.22" y1="473.90" y2="482.30" stroke="#e2e2e2" stroke-width="0.7"/>
<line x1="110.84" x2="110.84" y1="473.90" y2="482.30" stroke="#e2e2e2" stroke-width="0.7"/>
<line x1="124.46" x2="124.46" y1="473.90" y2="482.30" stroke="#a8a8a8" stroke-width="0.7"/>
<line x1="83.60" x2="83.60" y1="482.30" y2="490.70" stroke="#e2e2e2" stroke-width="0.7"/>
<line x1="97.22" x2="97.22" y1="482.30" y2="490.70" stroke="#e2e2e2" stroke-width="0.7"/>
<line x1="110.84" x2="110.84" y1="482.30" y2="490.70" stroke="#e2e2e2" stroke-width="0.7"/>
<line x1="124.46" x2="124.46" y1="482.30" y2="490.70" stroke="#a8a8a8" stroke-width="0.7"/>
<line x1="83.60" x2="83.60" y1="490.70" y2="499.10" stroke="#e2e2e2" stroke-width="0.7"/>
<line x1="97.22" x2="97.22" y1="490.70" y2="499.10" stroke="#e2e2e2" stroke-width="0.7"/>
<line x1="110.84" x2="110.84" y1="490.70" y2="499.10" stroke="#e2e2e2" stroke-width="0.7"/>
<path d="M121.3 445.1 L131 445.1 M130.2 441.3 Q137.5 443 137.3 444.7 Q136.5 447 133.3 448.2" fill="none" stroke="#e8141b" stroke-width="1.5" stroke-linecap="round"/>
<path d="M60.9 158.6 Q55 158.3 53 159.6 Q53.6 165 53.9 172.3 Q54 180 53.3 184.7 Q51 188 50.8 191 L50.3 202 Q50.2 205.8 53.5 205.9 L62.6 206.3" fill="none" stroke="#e8141b" stroke-width="1.8" stroke-linecap="round" stroke-linejoin="round"/>
</svg>
<div class="ln" style="left:52px;top:297.50px;color:#237893">1</div>
<div class="ln" style="left:52px;top:305.90px;color:#237893">2</div>
<div class="cd" style="left:82.90px;top:305.70px">        window.onload = <span class="k">function</span> () {</div>
<div class="ln" style="left:52px;top:314.30px;color:#237893">3</div>
<div class="cd" style="left:82.90px;top:314.10px">            <span class="k">var</span> spread = <span class="k">new</span> <span class="t">GC.Spread.Sheets.Workbook</span>(document.getElementById(<span class="s">"ss"</span>));</div>
<div class="ln" style="left:52px;top:322.70px;color:#237893">4</div>
<div class="cd" style="left:82.90px;top:322.50px">            initSpread(spread);</div>
<div class="ln" style="left:52px;top:331.10px;color:#237893">5</div>
<div class="cd" style="left:82.90px;top:330.90px">        };</div>
<div class="ln" style="left:52px;top:339.50px;color:#237893">6</div>
<div class="ln" style="left:52px;top:347.90px;color:#237893">7</div>
<div class="cd" style="left:82.90px;top:347.70px">        <span class="k">function</span> initSpread(spread) {</div>
<div class="ln" style="left:52px;top:356.30px;color:#237893">8</div>
<div class="cd" style="left:82.90px;top:356.10px">            <span class="k">if</span> (data.length &gt; <span class="nm">0</span>) {</div>
<div class="ln" style="left:52px;top:364.70px;color:#237893">9</div>
<div class="cd" style="left:82.90px;top:364.50px">                spread.fromJSON(data[<span class="nm">0</span>]);</div>
<div class="ln" style="left:52px;top:373.10px;color:#237893">10</div>
<div class="cd" style="left:82.90px;top:372.90px">                <span class="k">var</span> sheet = spread.getActiveSheet();</div>
<div class="ln" style="left:52px;top:381.50px;color:#237893">11</div>
<div class="cd" style="left:82.90px;top:381.30px">                sheet.suspendPaint();</div>
<div class="ln" style="left:52px;top:389.90px;color:#237893">12</div>
<div class="cd" style="left:82.90px;top:389.70px">                sheet.rowOutlines.group(<span class="nm">3</span>, <span class="nm">4</span>);</div>
<div class="ln" style="left:52px;top:398.30px;color:#237893">13</div>
<div class="cd" style="left:82.90px;top:398.10px">                sheet.rowOutlines.group(<span class="nm">8</span>, <span class="nm">3</span>);</div>
<div class="ln" style="left:52px;top:406.70px;color:#237893">14</div>
<div class="cd" style="left:82.90px;top:406.50px">                sheet.rowOutlines.group(<span class="nm">12</span>, <span class="nm">2</span>);</div>
<div class="ln" style="left:52px;top:415.10px;color:#237893">15</div>
<div class="cd" style="left:82.90px;top:414.90px">                <span class="cm">// works with 5 rows</span></div>
<div class="ln" style="left:52px;top:423.50px;color:#0b216f">16</div>
<div class="cd" style="left:82.90px;top:423.30px">                <span class="cm">// sheet.rowOutlines.group(15, 5);</span></div>
<div class="ln" style="left:52px;top:431.90px;color:#237893">17</div>
<div class="cd" style="left:82.90px;top:431.70px">                <span class="cm">// doesn't work with 6 rows (when the end of last grouping in level 2 matches the end of grouping in level 1)</span></div>
<div class="ln" style="left:52px;top:440.30px;color:#237893">18</div>
<div class="cd" style="left:82.90px;top:440.10px">                sheet.rowOutlines.group(<span class="nm">15</span>, <span class="nm">6</span>);</div>
<div class="ln" style="left:52px;top:448.70px;color:#237893">19</div>
<div class="cd" style="left:82.90px;top:448.50px">                sheet.rowOutlines.group(<span class="nm">3</span>, <span class="nm">18</span>);</div>
<div class="ln" style="left:52px;top:457.10px;color:#237893">20</div>
<div class="ln" style="left:52px;top:465.50px;color:#237893">21</div>
<div class="cd" style="left:82.90px;top:465.30px">                sheet.columnOutlines.group(<span class="nm">1</span>, <span class="nm">4</span>);</div>
<div class="ln" style="left:52px;top:473.90px;color:#237893">22</div>
<div class="cd" style="left:82.90px;top:473.70px">                sheet.columnOutlines.group(<span class="nm">6</span>, <span class="nm">4</span>);</div>
<div class="ln" style="left:52px;top:482.30px;color:#237893">23</div>
<div class="cd" style="left:82.90px;top:482.10px">                sheet.resumePaint();</div>
<div class="ln" style="left:52px;top:490.70px;color:#237893">24</div>
<div class="cd" style="left:82.90px;top:490.50px">            }</div>
<svg class="ab" style="left:0;top:0" width="675" height="500"><g fill="none" stroke="#e8141b" stroke-width="2" stroke-linecap="round" stroke-linejoin="round"><path d="M1.3 175.6 Q1.5 170 2.8 165.6 Q4.6 164.6 6.5 169.2 Q8 164.6 9.7 164.4 Q10.5 168 10.8 175.4"/><path d="M14 170 L14.8 175.2 Q16 176.5 17.4 177.4"/><path d="M20.2 170.2 Q16.2 171.2 17.2 173.2 Q19.6 174.8 17.4 177.4"/><path d="M25.3 169.8 Q21.3 171 22.5 173 Q25 174.6 22.4 177.2 Q26 178 29 176.6"/><path d="M31 170 Q31 175 31.6 176.2 Q33 177 34.9 172.9 Q36.2 168.6 39.6 167 Q42 167.5 42.2 176"/><path d="M48.2 171 Q45.5 169.8 44.4 171.6 Q44.2 175.2 46.5 175 Q48 174.6 48.6 171 Q48.6 177 48.2 182.5 Q46.5 183.8 43 183"/></g><circle cx="13.7" cy="164.9" r="1.1" fill="#e8141b"/><circle cx="31" cy="164.8" r="1.1" fill="#e8141b"/></svg>
</div></body></html>
